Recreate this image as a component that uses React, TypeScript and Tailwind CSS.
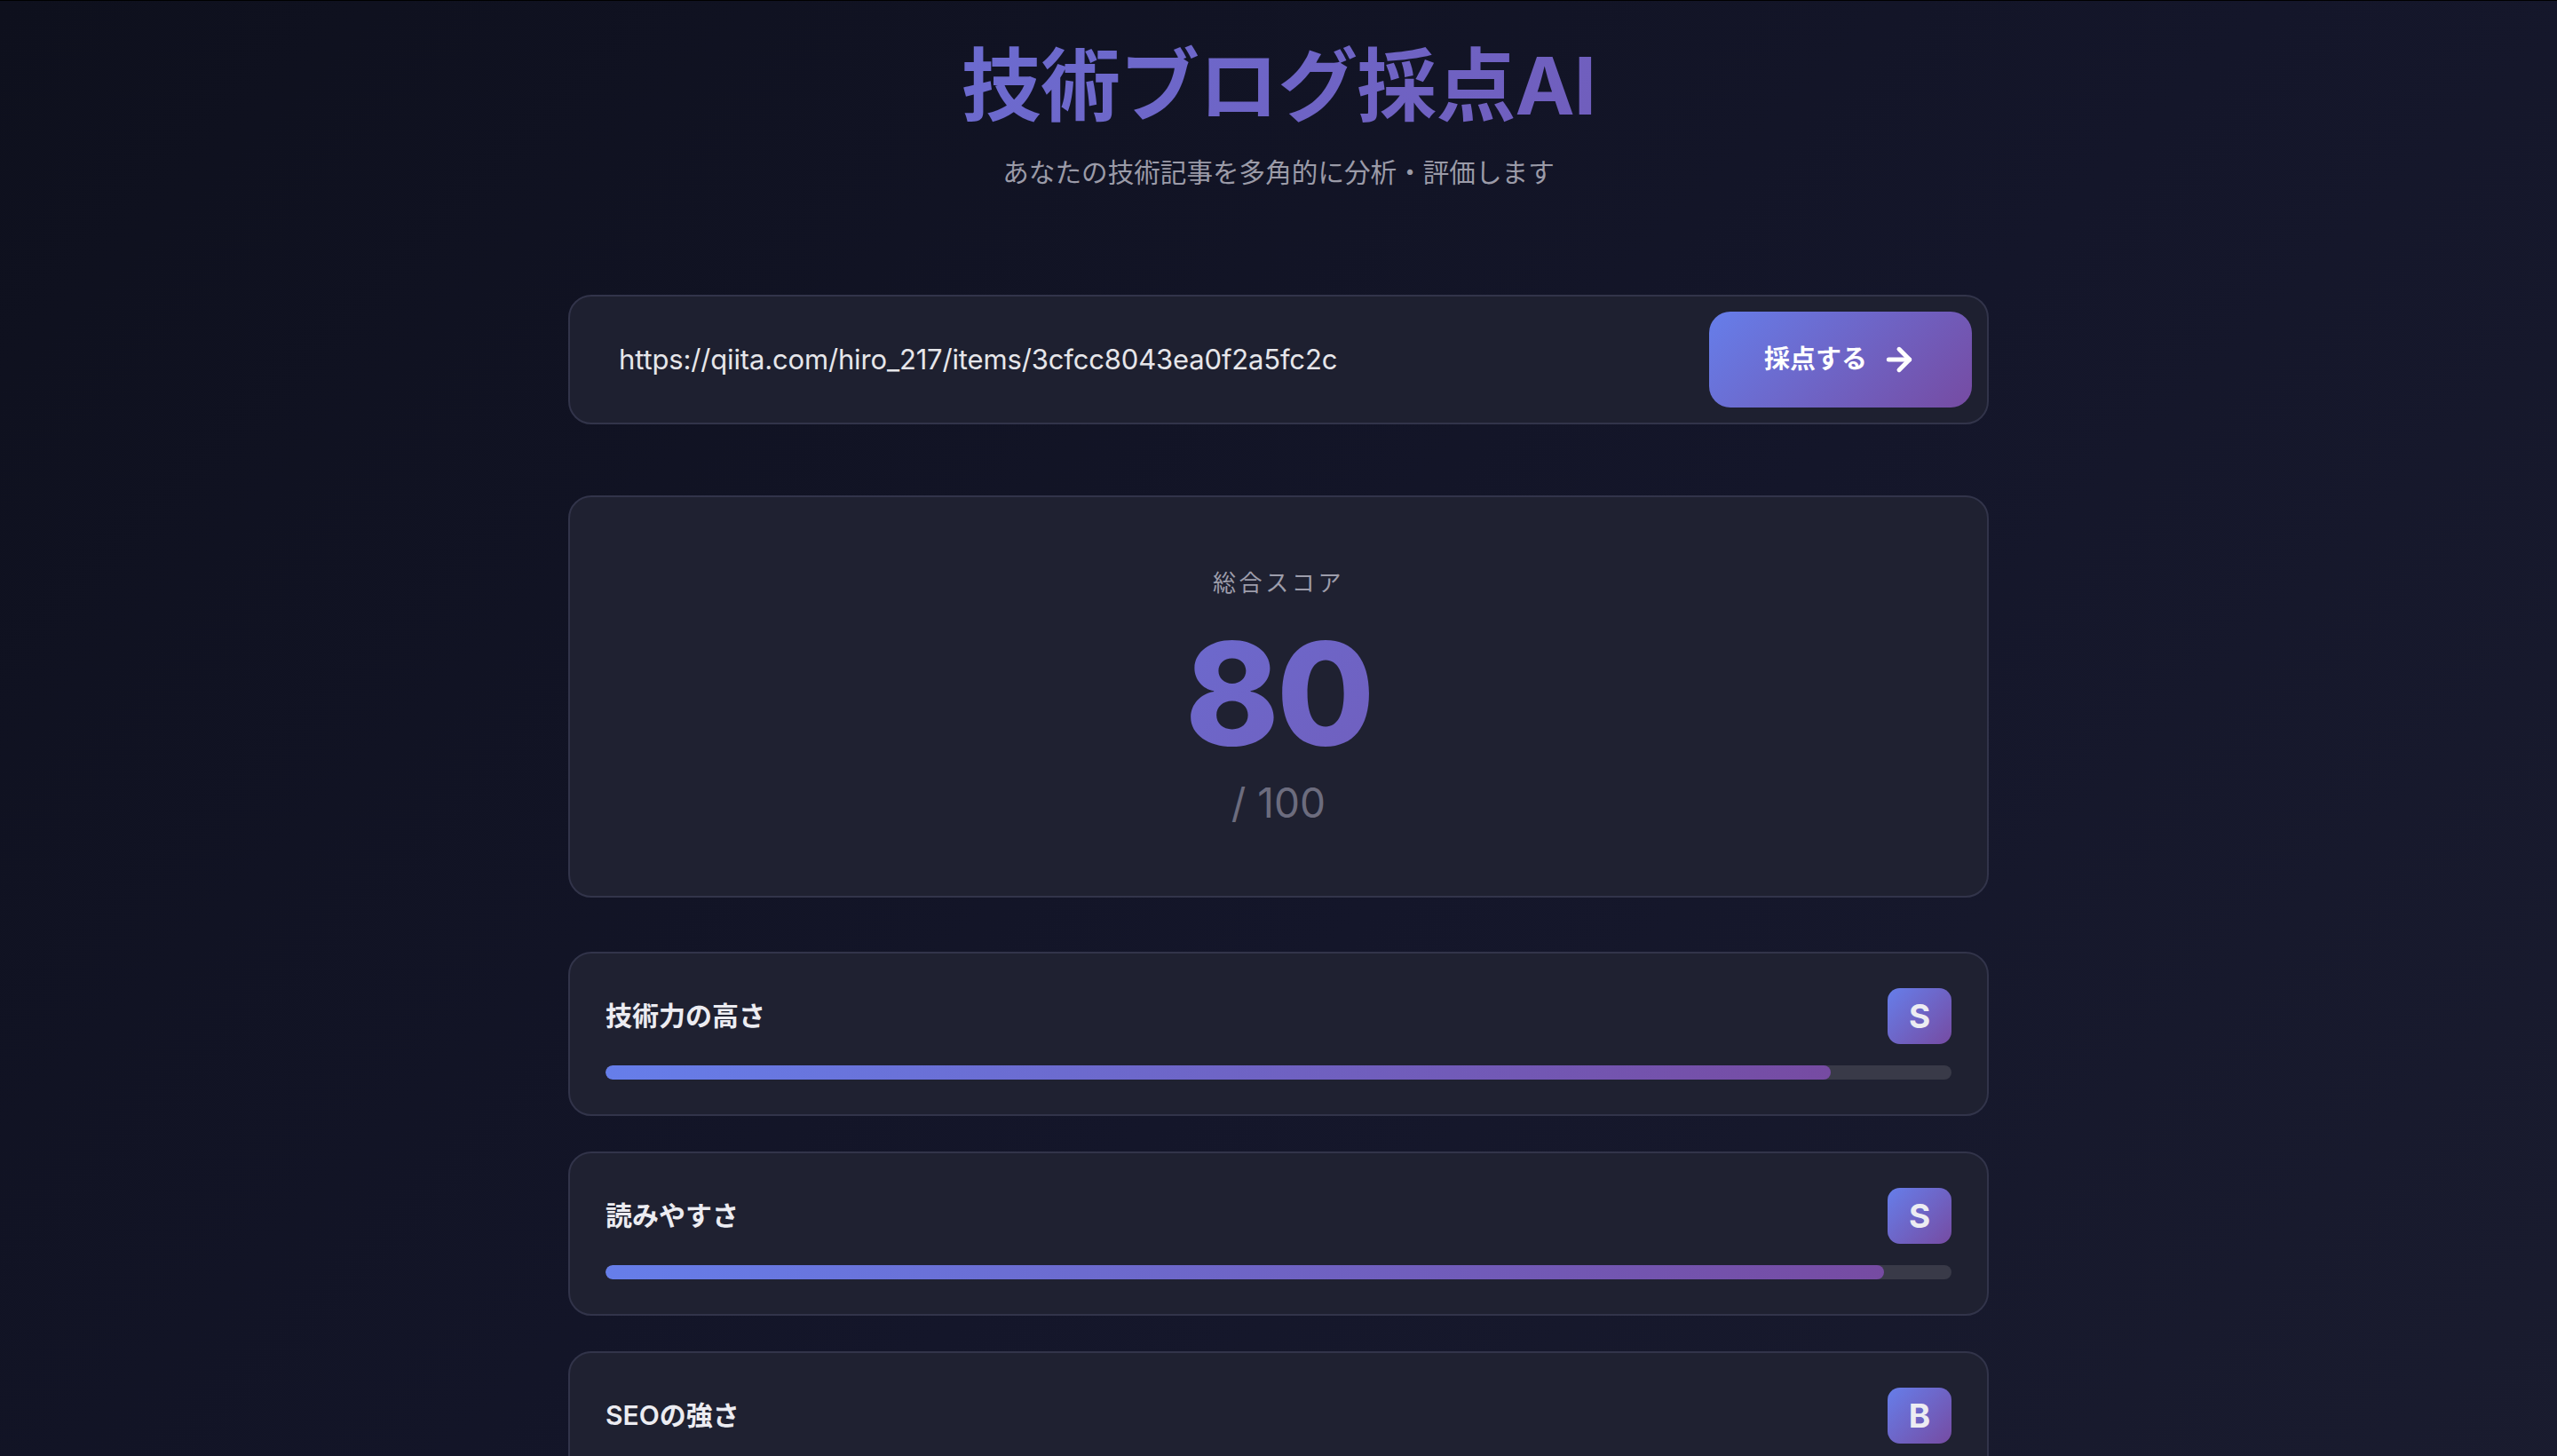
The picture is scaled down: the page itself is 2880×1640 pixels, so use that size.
import React from "react";
import { ArrowRight } from "lucide-react";

const categories = [
  { label: "技術力の高さ", grade: "S", pct: 91 },
  { label: "読みやすさ", grade: "S", pct: 95 },
  { label: "SEOの強さ", grade: "B", pct: 70 },
];

export default function App() {
  return (
    <div className="min-h-screen border-t border-black bg-[linear-gradient(135deg,#0e101d_0%,#14162a_55%,#1a1c2f_100%)] font-['Inter','Noto_Sans_CJK_JP',sans-serif] pb-[80px]">
      <header className="pt-[43px] text-center">
        <h1 className="text-[90px] leading-[106px] font-bold tracking-[-0.01em] bg-[linear-gradient(135deg,#667eea_0%,#764ba2_100%)] bg-clip-text text-transparent">
          技術ブログ採点AI
        </h1>
        <p className="mt-[22px] text-[29.6px] leading-[44px] text-[#9b9ba8]">
          あなたの技術記事を多角的に分析・評価します
        </p>
      </header>

      <main className="mx-auto mt-[116px] w-[1600px]">
        <div className="flex h-[146px] items-center rounded-[26px] border-2 border-[#32344a] bg-[#1e2030] p-[17px]">
          <div className="flex-1 pl-[38px] text-[31px] text-[#e6e6ea] tracking-[-0.005em]">
            https://qiita.com/hiro_217/items/3cfcc8043ea0f2a5fc2c
          </div>
          <button className="flex h-[108px] w-[296px] items-center justify-center gap-[16px] rounded-[24px] bg-[linear-gradient(135deg,#667eea_0%,#764ba2_100%)] text-[29px] font-bold text-white">
            <span>採点する</span>
            <ArrowRight size={40} strokeWidth={3} />
          </button>
        </div>

        <div className="mt-[80px] flex flex-col items-stretch rounded-[26px] border-2 border-[#32344a] bg-[#1f2131] pt-[79px] pb-[82px] text-center">
          <div className="text-[26px] leading-[36px] tracking-[0.14em] text-[#9d9dab]">総合スコア</div>
          <div className="mt-[26px] text-[160px] leading-none font-extrabold tracking-[-0.02em] bg-[linear-gradient(135deg,#667eea_0%,#764ba2_100%)] bg-clip-text text-transparent">
            80
          </div>
          <div className="mt-[20px] text-[46px] leading-none text-[#6c6c7e]">/ 100</div>
        </div>

        <div className="mt-[61px] flex flex-col gap-[40px]">
          {categories.map((c) => (
            <div
              key={c.label}
              className="rounded-[26px] border-2 border-[#32344a] bg-[#1f2131] px-[40px] py-[39px]"
            >
              <div className="flex items-center justify-between">
                <span className="text-[30px] font-semibold text-[#ececf1]">{c.label}</span>
                <span className="flex h-[63px] w-[72px] items-center justify-center rounded-[14px] bg-[linear-gradient(135deg,#667eea_0%,#764ba2_100%)] text-[37px] font-bold text-[#ececf2]">
                  {c.grade}
                </span>
              </div>
              <div className="mt-[24px] h-[16px] w-full overflow-hidden rounded-full bg-[#393a48]">
                <div
                  className="h-full rounded-full bg-[linear-gradient(90deg,#667eea_0%,#764ba2_100%)]"
                  style={{ width: `${c.pct}%` }}
                />
              </div>
            </div>
          ))}
        </div>
      </main>
    </div>
  );
}
